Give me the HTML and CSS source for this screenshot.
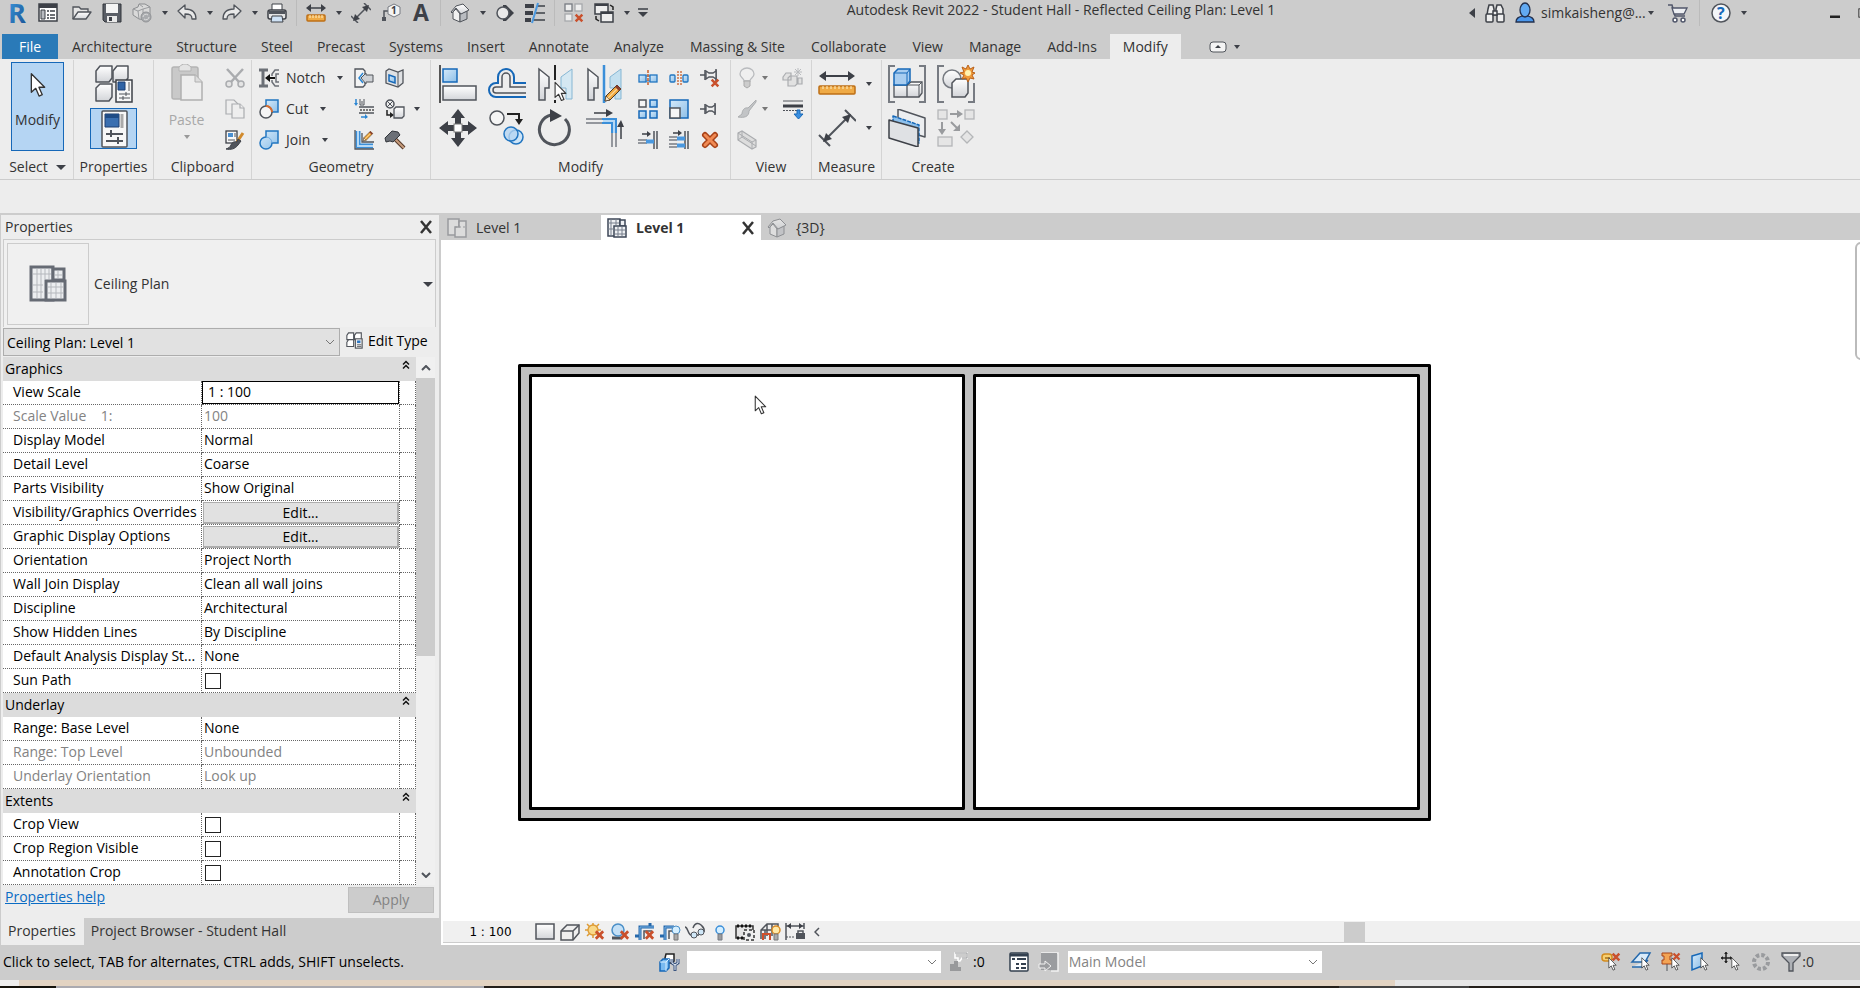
FILE: index.html
```html
<!DOCTYPE html>
<html lang="en">
  <head>
    <meta charset="UTF-8" />
    <meta name="viewport" content="width=device-width, initial-scale=1.0" />
    <title>Autodesk Revit 2022 - Student Hall</title>
    <link rel="stylesheet" href="styles.css">
  </head>
  <body>
    <!-- shared shapes -->
    <svg class="defs" aria-hidden="true">
      <defs>
        <linearGradient id="metal" x1="0" y1="0" x2="0" y2="1">
          <stop offset="0" stop-color="#ffffff" />
          <stop offset="1" stop-color="#d3d5d9" />
        </linearGradient>
        <linearGradient id="sky" x1="0" y1="0" x2="1" y2="1">
          <stop offset="0" stop-color="#d6eafa" />
          <stop offset="1" stop-color="#8dbfe8" />
        </linearGradient>
        <linearGradient id="logo" x1="0" y1="0" x2="1" y2="1">
          <stop offset="0" stop-color="#3f9be0" />
          <stop offset="1" stop-color="#164f92" />
        </linearGradient>
        <symbol id="pointer" viewBox="0 0 12 19">
          <path d="M1 1v14l3.3-3 2.5 5.8 2.4-1-2.5-5.6H11z" fill="#fff" stroke="#333" stroke-linejoin="round" />
        </symbol>
        <symbol id="cross" viewBox="0 0 12 12">
          <path d="M2 2l8 8M10 2l-8 8" stroke="#c9502c" stroke-width="3" />
        </symbol>
        <symbol id="pencil" viewBox="0 0 20 20">
          <path d="M2 18l1-5L14 2l4 4L7 17z" fill="#f0a73c" stroke="#4a3a2a" stroke-linejoin="round" />
          <path d="M2 18l1-5 4 4z" fill="#f7e2c0" stroke="#4a3a2a" stroke-width=".7" />
          <path d="M12 4l4 4 2-2-4-4z" fill="#8a3e2c" />
          <path d="M5 15L14 6" stroke="#fbd898" stroke-width="1.3" />
        </symbol>
        <symbol id="house" viewBox="0 0 20 20">
          <path d="M3 9v7l7 3V11L6 6z" fill="#f1f1f1" stroke="#50545b" />
          <path d="M10 11v8l7-3V8z" fill="#b9bcc1" stroke="#50545b" />
          <path d="M1 9l5-6 7-2 6 6-8 4-5-6-4 5z" fill="url(#metal)" stroke="#50545b" stroke-linejoin="round" />
        </symbol>
        <symbol id="ruler" viewBox="0 0 38 32">
          <path d="M4 8h30" stroke="#3d4047" stroke-width="2" />
          <path d="M1 8l7-5v10zM37 8l-7-5v10z" fill="#3d4047" />
          <rect x="1" y="18" width="36" height="8" rx="1" fill="#efaa45" stroke="#bd6f16" stroke-width="1.5" />
          <path d="M5 18v3M9 18v3M13 18v3M17 18v3M21 18v3M25 18v3M29 18v3M33 18v3" stroke="#fff1c9" />
        </symbol>
        <symbol id="ruler-small" viewBox="0 0 20 20">
          <path d="M3 5h14" stroke="#3d4047" stroke-width="1.5" />
          <path d="M0 5l5-4v8zM20 5l-5-4v8z" fill="#3d4047" />
          <rect x="1" y="12" width="18" height="6" rx="1" fill="#efaa45" stroke="#bd6f16" stroke-width="1.5" />
          <path d="M4 12v3M7 12v3M10 12v3M13 12v3M16 12v3" stroke="#fff1c9" />
        </symbol>
        <symbol id="dimension" viewBox="0 0 38 38">
          <path d="M8 30L30 8M1 26l11 11M27 1l11 11" stroke="#50545b" stroke-width="2" fill="none" />
          <path d="M5 33l3-9 6 6zM33 5l-9 3 6 6z" fill="#3d4047" />
        </symbol>
        <symbol id="dimension-small" viewBox="0 0 20 20">
          <path d="M4 16L16 4M0 13l7 7M13 0l7 7" stroke="#50545b" stroke-width="1.500" fill="none" />
          <path d="M2 18l2-7 5 5zM18 2l-7 2 5 5z" fill="#3d4047" />
        </symbol>
        <symbol id="chevrons" viewBox="0 0 8 10">
          <path d="M1 4.500l3-3 3 3M1 8.500l3-3 3 3" fill="none" stroke="#111" stroke-width="1.500" />
        </symbol>
        <symbol id="down" viewBox="0 0 10 6">
          <path d="M1 1l4 4 4-4" fill="none" stroke="#777" />
        </symbol>
        <symbol id="close" viewBox="0 0 14 14">
          <path d="M2 1l10 12M12 1L2 13" stroke="#333" stroke-width="2.500" />
        </symbol>
      </defs>
    </svg>

    <header class="titlebar">
      <div class="quick-access">
        <button class="tool" title="Revit">
          <svg viewBox="0 0 20 20" class="icon"><text x="0" y="20" class="logo-letter">R</text></svg>
        </button>
        <button class="tool tool-gap" title="Home">
          <svg viewBox="0 0 20 20" class="icon"><rect x="1" y="1" width="18" height="17" fill="#fff" stroke="#3d4047" stroke-width="1.500" /><path d="M1 1h18v4H1z" fill="#3d4047" /><path d="M3 7h4v9H3z" fill="#b9bcc1" stroke="#3d4047" /><path d="M9 8h2M12 8h5M9 12h2M12 12h5M9 15h2M12 15h5" stroke="#3d4047" stroke-width="1.500" /></svg>
        </button>
        <button class="tool" title="Open">
          <svg viewBox="0 0 20 20" class="icon"><path d="M1 16V4h6l2 2h7v4" fill="#e6e6e6" stroke="#50545b" stroke-width="1.300" /><path d="M1 16L6 9h13l-5 7z" fill="url(#metal)" stroke="#50545b" stroke-width="1.300" stroke-linejoin="round" /></svg>
        </button>
        <button class="tool" title="Save">
          <svg viewBox="0 0 20 20" class="icon"><path d="M1 1h18v18H3l-2-2z" fill="#5a5e66" stroke="#33363c" /><path d="M4 1h12v9H4z" fill="#f4f4f4" /><path d="M5 13h10v6H5z" fill="#e9e9e9" /><path d="M7 14h3v4H7z" fill="#3d4047" /></svg>
        </button>
        <button class="tool split" title="Synchronize">
          <svg viewBox="0 0 20 20" class="icon"><path d="M1 6l5-2 1-3h6l5 3v7l-3 6-8-1-6-4z" fill="#d9d9d9" stroke="#8b8d90" /><path d="M1 6l5 2 1 8M6 8l5-2 7-2M11 6v6M7 1l4 3" fill="none" stroke="#9a9c9f" /><circle cx="14" cy="14" r="5" fill="#a9abae" stroke="#909295" /><path d="M11 14a3 3 0 0 1 5-2M17 14a3 3 0 0 1-5 2" fill="none" stroke="#ddd" /></svg>
          <span class="caret"></span>
        </button>
        <button class="tool split" title="Undo">
          <svg viewBox="0 0 20 20" class="icon"><path d="M1 8l7-6v4c8 0 11 4 11 10h-4c0-4-2-5-7-5v4z" fill="#e8e8e8" stroke="#50545b" stroke-width="1.300" stroke-linejoin="round" /></svg>
          <span class="caret"></span>
        </button>
        <button class="tool split" title="Redo">
          <svg viewBox="0 0 20 20" class="icon"><path d="M19 8l-7-6v4C4 6 1 10 1 16h4c0-4 2-5 7-5v4z" fill="#e8e8e8" stroke="#50545b" stroke-width="1.300" stroke-linejoin="round" /></svg>
          <span class="caret"></span>
        </button>
        <button class="tool" title="Print">
          <svg viewBox="0 0 20 20" class="icon"><path d="M5 8V1h10v7" fill="#fff" stroke="#3d4047" /><rect x="1" y="7" width="18" height="9" rx="2" fill="#e4e4e4" stroke="#3d4047" stroke-width="1.500" /><path d="M2 8h16v3H2z" fill="#50545b" /><path d="M5 13h10l1 6H4z" fill="#cfe2f5" stroke="#3d4047" /></svg>
        </button>
        <span class="divider"></span>
        <button class="tool split" title="Measure">
          <svg class="icon"><use href="#ruler-small" /></svg>
          <span class="caret"></span>
        </button>
        <button class="tool" title="Aligned Dimension"><svg class="icon"><use href="#dimension-small" /></svg></button>
        <button class="tool" title="Tag by Category">
          <svg viewBox="0 0 20 20" class="icon"><path d="M8 8H3v7" fill="none" stroke="#50545b" stroke-width="1.500" /><rect x="1" y="14" width="4" height="4" fill="#50545b" /><path d="M13 1l6 3v7l-6 3-6-3V4z" fill="#f4f4f4" stroke="#777b82" /><text x="10" y="11" class="tag-number">1</text></svg>
        </button>
        <button class="tool" title="Text"><svg viewBox="0 0 20 20" class="icon"><text x="2" y="18" class="letter-icon">A</text></svg></button>
        <span class="divider"></span>
        <button class="tool split" title="Default 3D View">
          <svg class="icon"><use href="#house" /></svg>
          <span class="caret"></span>
        </button>
        <button class="tool" title="Section">
          <svg viewBox="0 0 20 20" class="icon"><path d="M8 2h3l8 8-8 8H8z" fill="#3d4047" /><circle cx="8" cy="10" r="6" fill="#e9e9e9" stroke="#50545b" stroke-width="1.500" /></svg>
        </button>
        <button class="tool" title="Thin Lines">
          <svg viewBox="0 0 20 20" class="icon"><path d="M0 3h9M0 10h8M0 17h6" stroke="#3d4047" stroke-width="4" /><path d="M12 3h8M11 10h9M8 17h12" stroke="#3d4047" stroke-width="1.500" /><path d="M13 0L7 20" stroke="#4a98df" stroke-width="2" /></svg>
        </button>
        <span class="divider"></span>
        <button class="tool" title="Close Inactive Views">
          <svg viewBox="0 0 20 20" class="icon"><g fill="#eee" stroke="#777b82" stroke-width="1.300"><rect x="1" y="1" width="7" height="7" /><rect x="11" y="1" width="7" height="7" stroke="#a7a9ac" /><rect x="1" y="11" width="7" height="7" stroke="#a7a9ac" /></g><use href="#cross" x="10" y="10" width="10" height="10" /></svg>
        </button>
        <button class="tool split" title="Switch Windows">
          <svg viewBox="0 0 20 20" class="icon"><g fill="#eee" stroke="#3d4047" stroke-width="1.500"><rect x="1" y="1" width="13" height="10" /><rect x="7" y="9" width="12" height="10" /></g><path d="M1 2h13M7 10h12" stroke="#3d4047" stroke-width="2" /><path d="M16 2l3 2v3M2 13v3l3 2" fill="none" stroke="#222" stroke-width="1.500" /></svg>
          <span class="caret"></span>
        </button>
        <button class="tool menu-end" title="Customize Quick Access Toolbar">
          <svg viewBox="0 0 10 10" class="icon-small"><path d="M0 1h10" stroke="#3d4047" stroke-width="1.500" /><path d="M0 4h10L5 9z" fill="#3d4047" /></svg>
        </button>
      </div>
      <h1 class="window-title">Autodesk Revit 2022 - Student Hall - Reflected Ceiling Plan: Level 1</h1>
      <div class="account-bar">
        <button class="tool collapse" title="Collapse search"><svg viewBox="0 0 6 10" class="arrow-left"><path d="M6 0v10L0 5z" fill="#3d4047" /></svg></button>
        <button class="tool" title="Search">
          <svg viewBox="0 0 20 20" class="icon"><g fill="#eee" stroke="#3d4047" stroke-width="1.500"><path d="M3 6l1-4h4l1 4v6H2z" /><path d="M11 6l1-4h4l2 4v6h-7z" /><rect x="1" y="11" width="7" height="8" rx="1" /><rect x="12" y="11" width="7" height="8" rx="1" /><path d="M8 8h4v4H8z" /></g></svg>
        </button>
        <button class="tool account" title="Account">
          <svg viewBox="0 0 20 20" class="icon"><path d="M1 19c0-4 3-5 6-6h6c3 1 6 2 6 6z" fill="#4a98ee" stroke="#23304d" stroke-width="1.300" /><ellipse cx="10" cy="7" rx="5" ry="7" fill="#62aaf2" stroke="#23304d" stroke-width="1.300" /></svg>
          <span>simkaisheng@...</span><span class="caret"></span>
        </button>
        <button class="tool" title="App Store">
          <svg viewBox="0 0 20 20" class="icon"><path d="M0 2h4l3 11h10" fill="none" stroke="#50566a" stroke-width="1.500" /><path d="M4 5h15l-3 6H6z" fill="#eceef2" stroke="#50566a" stroke-width="1.300" /><circle cx="7" cy="17" r="2" fill="#fff" stroke="#50566a" stroke-width="1.500" /><circle cx="15" cy="17" r="2" fill="#fff" stroke="#50566a" stroke-width="1.500" /></svg>
        </button>
        <span class="divider"></span>
        <button class="tool split" title="Help">
          <svg viewBox="0 0 20 20" class="icon"><circle cx="10" cy="10" r="9" fill="#f4f6f9" stroke="#50545b" stroke-width="1.500" /><text x="6" y="16" class="help-mark">?</text></svg>
          <span class="caret"></span>
        </button>
        <span class="spacer"></span>
        <button class="tool" title="Minimize"><svg viewBox="0 0 10 10" class="icon-small"><path d="M0 9h10" stroke="#222" stroke-width="3" /></svg></button>
        <button class="tool maximize" title="Maximize"><svg viewBox="0 0 12 12" class="icon-small"><rect x="1" y="1" width="10" height="10" fill="none" stroke="#222" /></svg></button>
      </div>
    </header>

    <nav class="ribbon-tabs">
      <button class="ribbon-tab file">File</button>
      <button class="ribbon-tab">Architecture</button>
      <button class="ribbon-tab">Structure</button>
      <button class="ribbon-tab">Steel</button>
      <button class="ribbon-tab">Precast</button>
      <button class="ribbon-tab">Systems</button>
      <button class="ribbon-tab">Insert</button>
      <button class="ribbon-tab">Annotate</button>
      <button class="ribbon-tab roomy">Analyze</button>
      <button class="ribbon-tab roomy">Massing &amp; Site</button>
      <button class="ribbon-tab roomy">Collaborate</button>
      <button class="ribbon-tab roomy">View</button>
      <button class="ribbon-tab roomy">Manage</button>
      <button class="ribbon-tab roomy">Add-Ins</button>
      <button class="ribbon-tab roomy active">Modify</button>
      <button class="ribbon-state" title="Minimize ribbon">
        <svg viewBox="0 0 18 12" class="state-icon"><rect x="1" y="1" width="16" height="10" rx="3" fill="#f4f4f4" stroke="#50545b" /><path d="M6 7l3-3 3 3z" fill="#3d4047" /></svg>
        <span class="caret"></span>
      </button>
    </nav>

    <section class="ribbon">
      <div class="panel panel-select">
        <div class="panel-body">
          <button class="modify-button">
            <svg class="modify-arrow"><use href="#pointer" /></svg>
            Modify
          </button>
        </div>
        <div class="panel-label">Select <span class="caret wide"></span></div>
      </div>

      <div class="panel panel-properties">
        <div class="panel-body stack">
          <button class="big" title="Type Properties">
            <svg viewBox="0 0 38 38" class="icon-large"><g fill="url(#metal)" stroke="#50545b" stroke-width="1.500" stroke-linejoin="round"><path d="M1 6l4-5h12v12l-3 4H1z" /><path d="M18 6l4-5h11v12l-3 4H18z" /><path d="M1 23l4-4h12v13l-3 4H1z" /></g><rect x="21" y="15" width="16" height="22" fill="#f7f7f7" stroke="#3d4047" stroke-width="1.500" /><path d="M23 17h7v8h-7z" fill="#2f63a5" stroke="#1c3f70" /><path d="M34 17v9" stroke="#aaa" stroke-width="2" /><path d="M24 29h11M24 33h11M31 27v4M28 31v4" stroke="#50545b" /></svg>
          </button>
          <button class="big selected" title="Properties">
            <svg viewBox="0 0 38 38" class="icon-large"><rect x="7" y="1" width="25" height="36" rx="1" fill="#f7f7f7" stroke="#50545b" stroke-width="1.500" /><path d="M10 4h14v13H10z" fill="#3a6fb0" stroke="#1c3f70" /><path d="M10 4h14v4H10z" fill="#1f4c86" /><path d="M27 4v14" stroke="#aaa" stroke-width="3" /><path d="M11 24h17M11 31h17M16 20v7M23 27v7" stroke="#50545b" stroke-width="2" /></svg>
          </button>
        </div>
        <div class="panel-label">Properties</div>
      </div>

      <div class="panel panel-clipboard">
        <div class="panel-body columns">
          <button class="paste-button" disabled>
            <svg viewBox="0 0 34 38" class="icon-large"><rect x="2" y="3" width="26" height="32" rx="2" fill="#c9c9c9" stroke="#b4b4b4" stroke-width="1.500" /><path d="M9 7V3c4-4 8-4 12 0v4z" fill="#e4e4e4" stroke="#b4b4b4" /><path d="M11 11h14l7 7v18H11z" fill="#eee" stroke="#b0b0b0" stroke-width="1.500" /><path d="M25 11v7h7" fill="#ddd" stroke="#b0b0b0" /></svg>
            Paste
            <span class="caret"></span>
          </button>
          <div class="small-grid one">
            <button class="small" title="Cut to Clipboard" disabled><svg viewBox="0 0 20 20" class="icon"><path d="M2 1l12 13M18 1L6 14" stroke="#aaacaf" stroke-width="2.500" /><circle cx="4" cy="16" r="3" fill="#e4e4e4" stroke="#aaacaf" stroke-width="1.500" /><circle cx="16" cy="16" r="3" fill="#e4e4e4" stroke="#aaacaf" stroke-width="1.500" /></svg></button>
            <button class="small" title="Copy to Clipboard" disabled><svg viewBox="0 0 20 20" class="icon"><g fill="#eee" stroke="#aaacaf" stroke-width="1.200"><path d="M1 1h8l4 4v10H1z" /><path d="M7 5h8l4 4v10H7z" /><path d="M15 5v4h4" /></g></svg></button>
            <button class="small" title="Match Type Properties"><svg viewBox="0 0 20 20" class="icon"><rect x="1" y="1" width="11" height="12" fill="#f7f7f7" stroke="#3d4047" stroke-width="1.300" /><path d="M3 3h5v4H3z" fill="#4a8fd0" /><path d="M10 3v4M3 10h7" stroke="#50545b" /><path d="M18 3l-6 9" stroke="#d18a2c" stroke-width="3" /><path d="M13 9l3 2-3 4c-3 4-7 5-12 4 3-1 4-2 5-4 1-3 4-4 6-3z" fill="#50545b" stroke="#3d4047" /></svg></button>
          </div>
        </div>
        <div class="panel-label">Clipboard</div>
      </div>

      <div class="panel panel-geometry">
        <div class="panel-body columns">
          <div class="commands">
            <button class="command"><svg viewBox="0 0 20 20" class="icon"><path d="M0 2h9M0 18h9M4 2v16" stroke="#6c7077" stroke-width="3" /><path d="M20 2h-4l-3 4v2M20 18h-4l-3-4v-2M20 6h-3v8h3" fill="none" stroke="#6c7077" stroke-width="1.500" /><path d="M9 10h7" stroke="#111" stroke-width="2" /><path d="M6 10l5-4v8z" fill="#111" /></svg>Notch<span class="caret"></span></button>
            <button class="command"><svg viewBox="0 0 20 20" class="icon"><rect x="7" y="1" width="12" height="12" fill="url(#sky)" stroke="#2175c0" stroke-width="1.500" /><circle cx="7" cy="13" r="6" fill="#f5f5f5" stroke="#50545b" stroke-width="1.500" /><path d="M7 7a6 6 0 0 1 6 6" fill="none" stroke="#d86a2c" stroke-width="2" /></svg>Cut<span class="caret"></span></button>
            <button class="command"><svg viewBox="0 0 20 20" class="icon"><path d="M7 1h12v12h-6a6 6 0 1 1-6-6z" fill="url(#sky)" stroke="#2175c0" stroke-width="1.500" /><path d="M7 7a6 6 0 0 1 6 6" fill="none" stroke="#6fa9dc" /></svg>Join<span class="caret"></span></button>
          </div>
          <div class="small-grid two">
            <button class="small" title="Beam/Column Joins"><svg viewBox="0 0 20 20" class="icon"><path d="M1 1h8l2 2v14l-2 2H1z" fill="#f4f4f4" stroke="#50545b" stroke-width="1.300" /><path d="M7 10l5-5v2h7v7h-7v2z" fill="#cfd2d6" stroke="#50545b" /><path d="M9 5l-4 5 4 5" fill="none" stroke="#2b86d3" stroke-width="1.500" /></svg></button>
            <button class="small" title="Split Face"><svg viewBox="0 0 20 20" class="icon"><path d="M1 3l3-2 9 3 5-2v13l-5 4L1 15z" fill="#dfe1e4" stroke="#50545b" stroke-width="1.300" /><path d="M13 4v15" stroke="#50545b" /><path d="M4 7l6 2v6l-6-2z" fill="url(#sky)" stroke="#1668b8" stroke-width="1.500" /></svg></button>
            <button class="small" title="Wall Joins"><svg viewBox="0 0 20 20" class="icon"><path d="M2 0v5M7 18h6" stroke="#2b86d3" stroke-width="1.500" /><path d="M0 4h4L2 7zM11 15v5l3-2z" fill="#2b86d3" /><path d="M6 0v6h4V0M8 2v3" fill="#eee" stroke="#50545b" /><path d="M5 8h15M5 14h15" stroke="#50545b" stroke-width="1.500" /><path d="M6 11h14" stroke="#777" stroke-width="2" stroke-dasharray="2 1" /></svg></button>
            <button class="small" title="Unjoin"><svg viewBox="0 0 20 20" class="icon"><circle cx="5" cy="5" r="4" fill="#eee" stroke="#50545b" stroke-width="1.500" /><path d="M2 2l6 6M8 2L2 8" stroke="#50545b" /><path d="M2 11v5h4" fill="none" stroke="#222" stroke-width="1.500" /><path d="M5 13l4 3-4 3z" fill="#222" /><path d="M9 10l2-2h8v9l-2 2H9z" fill="url(#metal)" stroke="#50545b" stroke-width="1.300" /></svg></button>
            <button class="small" title="Paint"><svg viewBox="0 0 20 20" class="icon"><path d="M4 1v15h15" fill="none" stroke="#3b8fd9" stroke-width="5" /><path d="M4 1v15h15" fill="none" stroke="#b7d9f5" stroke-width="2" /><path d="M1 0v19h19M8 3v9h12" fill="none" stroke="#50545b" stroke-width="1.300" /><use href="#pencil" x="8" y="0" width="12" height="12" /></svg></button>
            <button class="small" title="Demolish"><svg viewBox="0 0 20 20" class="icon"><path d="M9 8l10 10" stroke="#553a2a" stroke-width="4" /><path d="M9 8l10 10" stroke="#c79c7d" stroke-width="2" /><path d="M0 8l7-7 6 1 2 3-7 7-3-1-4 1z" fill="#6c7077" stroke="#33363c" /></svg></button>
          </div>
          <span class="caret middle"></span>
        </div>
        <div class="panel-label">Geometry</div>
      </div>

      <div class="panel panel-modify">
        <div class="panel-body columns">
          <div class="large-grid four">
            <button class="big" title="Align"><svg viewBox="0 0 38 38" class="icon-large"><path d="M1 0v38" stroke="#222" stroke-width="1.500" /><rect x="4" y="4" width="14" height="13" fill="url(#sky)" stroke="#1668b8" stroke-width="1.500" /><rect x="4" y="21" width="33" height="14" fill="url(#metal)" stroke="#50545b" stroke-width="1.500" /></svg></button>
            <button class="big" title="Offset"><svg viewBox="0 0 38 38" class="icon-large"><path d="M38 18H26v-6a8 8 0 0 0-16 0v6H8a7 7 0 0 0 0 14h30" fill="none" stroke="#1668b8" stroke-width="2" /><path d="M38 22H22V12a4 4 0 0 0-8 0v10H8a3 3 0 0 0 0 6h30" fill="none" stroke="#50545b" stroke-width="1.500" /></svg></button>
            <button class="big" title="Mirror - Pick Axis"><svg viewBox="0 0 38 38" class="icon-large"><path d="M2 4l10 8v11H8v12H2z" fill="url(#metal)" stroke="#50545b" stroke-width="1.500" /><path d="M35 4l-11 8v11h5v11h6z" fill="#d5e8f2" stroke="#86b7d4" /><path d="M18 0v38" stroke="#222" stroke-width="2" stroke-dasharray="15 20" /><use href="#pointer" x="17" y="16" width="13" height="21" /></svg></button>
            <button class="big" title="Mirror - Draw Axis"><svg viewBox="0 0 38 38" class="icon-large"><path d="M2 4l10 8v11H8v12H2z" fill="url(#metal)" stroke="#50545b" stroke-width="1.500" /><path d="M35 4l-11 8v11h5v11h6z" fill="#c4e0ef" stroke="#86b7d4" /><path d="M18 0v38" stroke="#3b8fd9" stroke-width="2.500" /><use href="#pencil" x="17" y="18" width="20" height="20" /></svg></button>
            <button class="big" title="Move"><svg viewBox="0 0 38 38" class="icon-large"><path d="M19 0l7 9h-4v6h-6V9h-4zM19 38l7-9h-4v-6h-6v6h-4zM0 19l9-7v4h6v6H9v4zM38 19l-9-7v4h-6v6h6v4z" fill="#3d4047" /><rect x="15" y="15" width="8" height="8" fill="#fff" stroke="#777" /></svg></button>
            <button class="big" title="Copy"><svg viewBox="0 0 38 38" class="icon-large"><circle cx="9" cy="9" r="7" fill="#f5f5f5" stroke="#50545b" stroke-width="1.500" /><path d="M19 5h12v8" fill="none" stroke="#222" stroke-width="2" /><path d="M27 10h8l-4 6z" fill="#222" /><circle cx="28" cy="28" r="7" fill="#cde4f7" stroke="#2175c0" stroke-width="1.500" /><circle cx="23" cy="25" r="7" fill="#b5d5f1" fill-opacity=".8" stroke="#2175c0" stroke-width="1.500" /></svg></button>
            <button class="big" title="Rotate"><svg viewBox="0 0 38 38" class="icon-large"><path d="M28 10a15 15 0 1 1-14-4" fill="none" stroke="#50545b" stroke-width="3" /><path d="M13 0l12 7-12 6z" fill="#3d4047" /></svg></button>
            <button class="big" title="Trim/Extend to Corner"><svg viewBox="0 0 38 38" class="icon-large"><path d="M0 10h18M0 14h18M26 20v18M30 20v18" stroke="#777b82" stroke-width="1.500" /><path d="M16 10h14v14M16 14h10v10" fill="none" stroke="#3b8fd9" stroke-width="2" /><path d="M17 12h11v12" fill="none" stroke="#b7d9f5" stroke-width="2" /><path d="M8 4h14M35 30V15" stroke="#3d4047" stroke-width="1.500" /><path d="M20 0l7 4-7 4zM31 18l4-7 3 7z" fill="#3d4047" /></svg></button>
          </div>
          <div class="small-grid three">
            <button class="small" title="Split Element"><svg viewBox="0 0 20 20" class="icon"><rect x="1" y="7" width="7" height="7" fill="url(#sky)" stroke="#2175c0" stroke-width="1.300" /><rect x="12" y="7" width="7" height="7" fill="url(#sky)" stroke="#2175c0" stroke-width="1.300" /><path d="M8 8h4M8 13h4" stroke="#2175c0" /><path d="M10 2v16" stroke="#c8602c" stroke-width="1.500" stroke-dasharray="3 1" /></svg></button>
            <button class="small" title="Split with Gap"><svg viewBox="0 0 20 20" class="icon"><rect x="1" y="7" width="5" height="7" rx="1" fill="url(#sky)" stroke="#2175c0" stroke-width="1.300" /><rect x="14" y="7" width="5" height="7" rx="1" fill="url(#sky)" stroke="#2175c0" stroke-width="1.300" /><path d="M9 3v15M12 3v15" stroke="#c8602c" stroke-width="1.300" stroke-dasharray="2 1" /></svg></button>
            <button class="small" title="Unpin"><svg viewBox="0 0 20 20" class="icon"><path d="M0 7h5M5 2v10M16 1v12" fill="none" stroke="#50545b" stroke-width="1.500" /><path d="M6 3l3 2h4l3-2v8l-3-2H9l-3 2z" fill="#eee" stroke="#50545b" stroke-width="1.300" /><use href="#cross" x="10" y="10" width="10" height="10" /></svg></button>
            <button class="small" title="Array"><svg viewBox="0 0 20 20" class="icon"><g fill="url(#sky)" stroke="#1668b8" stroke-width="1.500"><rect x="1" y="1" width="7" height="7" fill="#f5f5f5" stroke="#50545b" /><rect x="12" y="1" width="7" height="7" /><rect x="1" y="12" width="7" height="7" /><rect x="12" y="12" width="7" height="7" /></g></svg></button>
            <button class="small" title="Scale"><svg viewBox="0 0 20 20" class="icon"><rect x="1" y="1" width="18" height="18" fill="url(#sky)" stroke="#1668b8" stroke-width="1.500" /><rect x="1" y="9" width="10" height="10" fill="#f5f5f5" stroke="#50545b" stroke-width="1.500" /></svg></button>
            <button class="small" title="Pin"><svg viewBox="0 0 20 20" class="icon"><path d="M0 10h6M5 5v10M15 4v12" fill="none" stroke="#50545b" stroke-width="1.500" /><path d="M6 6l3 2h3l3-2v8l-3-2H9l-3 2z" fill="#eee" stroke="#50545b" stroke-width="1.300" /></svg></button>
            <button class="small" title="Trim/Extend Single Element"><svg viewBox="0 0 20 20" class="icon"><path d="M16 1v18M19 1v18" stroke="#50545b" stroke-width="1.500" /><path d="M0 10h9M0 13h9" stroke="#777b82" stroke-width="1.500" /><path d="M8 11.500h8" stroke="#4a98df" stroke-width="4" /><path d="M4 4h6" stroke="#3d4047" stroke-width="1.500" /><path d="M9 1l4 3-4 3z" fill="#3d4047" /></svg></button>
            <button class="small" title="Trim/Extend Multiple Elements"><svg viewBox="0 0 20 20" class="icon"><path d="M16 1v18M19 1v18" stroke="#50545b" stroke-width="1.500" /><path d="M0 7h8M0 10h8M0 14h8M0 17h8" stroke="#777b82" stroke-width="1.500" /><path d="M8 8.500h8M8 15.500h8" stroke="#4a98df" stroke-width="4" /><path d="M4 3h6" stroke="#3d4047" stroke-width="1.500" /><path d="M9 0l4 3-4 3z" fill="#3d4047" /></svg></button>
            <button class="small" title="Delete"><svg viewBox="0 0 20 20" class="icon"><path d="M5 5l10 10M15 5L5 15" stroke="#a84218" stroke-width="6" stroke-linecap="round" /><path d="M5 5l10 10M15 5L5 15" stroke="#f08a54" stroke-width="3" stroke-linecap="round" /></svg></button>
          </div>
        </div>
        <div class="panel-label">Modify</div>
      </div>

      <div class="panel panel-view">
        <div class="panel-body columns">
          <div class="view-grid">
            <button class="small" title="Hide in View" disabled><svg viewBox="0 0 20 20" class="icon"><path d="M7 13c0-3-4-3-4-7a7 6 0 0 1 14 0c0 4-4 4-4 7z" fill="#efefef" stroke="#b9bbbe" stroke-width="1.300" /><path d="M7 13h6v5l-3 2-3-2z" fill="#ccc" stroke="#aaa" /></svg></button>
            <span class="caret muted"></span>
            <button class="small" title="Displace Elements" disabled><svg viewBox="0 0 20 20" class="icon"><path d="M0 9l3-4h5v7H0zM5 10l2-2h7v8l-2 2H5zM15 10h4v6h-4z" fill="#e1e1e1" stroke="#aaacaf" stroke-width="1.200" /><path d="M15 0v8M11 4h8M12 1l6 6M18 1l-6 6" stroke="#b9bbbe" /></svg></button>
            <button class="small" title="Override Graphics" disabled><svg viewBox="0 0 20 20" class="icon"><path d="M19 1L11 9c-4-1-6 3-6 6l-4 3c6 1 11 0 11-6l7-9z" fill="#c2c4c6" stroke="#acaeb0" /></svg></button>
            <span class="caret muted"></span>
            <button class="small" title="Linework"><svg viewBox="0 0 20 20" class="icon"><path d="M0 2h20" stroke="#50545b" /><path d="M0 7h20" stroke="#3d4047" stroke-width="3" /><path d="M0 11.500h20" stroke="#50545b" stroke-dasharray="2 1" /><path d="M14 11h3v4h3l-4.500 5L11 15h3z" fill="#3b8fe0" stroke="#1668b8" /></svg></button>
            <button class="small" title="Selection Box" disabled><svg viewBox="0 0 20 20" class="icon"><path d="M1 3l4-2 14 9v7l-4 2L1 10z" fill="#ddd" stroke="#aaacaf" stroke-width="1.200" /><path d="M1 3l14 9 4-2M15 12v7M5 1v6l14 9M5 7l-4 3" fill="none" stroke="#aaacaf" /></svg></button>
          </div>
        </div>
        <div class="panel-label">View</div>
      </div>

      <div class="panel panel-measure">
        <div class="panel-body columns">
          <div class="large-grid measure">
            <button class="big" title="Measure"><svg class="icon-large"><use href="#ruler" /></svg></button>
            <span class="caret"></span>
            <button class="big" title="Aligned Dimension"><svg class="icon-large"><use href="#dimension" /></svg></button>
            <span class="caret"></span>
          </div>
        </div>
        <div class="panel-label">Measure</div>
      </div>

      <div class="panel panel-create">
        <div class="panel-body columns">
          <div class="large-grid two">
            <button class="big" title="Create Assembly"><svg viewBox="0 0 38 38" class="icon-large"><path d="M7 1H1v36h6M31 1h6v36h-6" fill="none" stroke="#777b82" stroke-width="2" /><g fill="url(#metal)" stroke="#50545b" stroke-width="1.300"><path d="M6 20h13v12H6zM19 20l4-3h11v11l-3 4H19z" /></g><path d="M6 8l4-4h12v12l-3 4H6z" fill="#a8cdf0" stroke="#1668b8" stroke-width="1.500" /><path d="M6 8h13v12M19 8l3-4" fill="none" stroke="#1668b8" /><path d="M19 20h12v12M31 20l3-3" fill="none" stroke="#50545b" /></svg></button>
            <button class="big" title="Create Group"><svg viewBox="0 0 38 38" class="icon-large"><path d="M7 1H1v36h6M31 37h6V18" fill="none" stroke="#777b82" stroke-width="2" /><circle cx="15" cy="14" r="9" fill="url(#metal)" stroke="#777b82" stroke-width="1.500" /><path d="M15 18l4-4h12v14l-3 4H15z" fill="url(#metal)" stroke="#50545b" stroke-width="1.500" /><path d="M31 0l2 4 4-2-2 5 3 1-3 2 2 4-4-1-2 4-2-4-4 1 2-4-4-2 4-1-2-5 4 2z" fill="#ef9a3a" stroke="#b9601a" /><circle cx="31" cy="8" r="3" fill="#fff2b0" /></svg></button>
            <button class="big" title="Create Parts"><svg viewBox="0 0 38 38" class="icon-large"><g stroke-width="1.500" stroke-linejoin="round"><path d="M10 0l27 9v19L10 20z" fill="#eceef0" stroke="#50545b" /><path d="M5 7l26 9v18L5 26z" fill="#8dc0ec" stroke="#1668b8" stroke-dasharray="4 1" /><path d="M1 11l29 8v19L1 29z" fill="#dfe1e4" stroke="#3d4047" /></g></svg></button>
            <button class="big" title="Create Similar" disabled><svg viewBox="0 0 38 38" class="icon-large"><g fill="#e5e5e5" stroke="#b4b6b8" stroke-width="1.300"><rect x="1" y="1" width="9" height="9" /><rect x="28" y="1" width="9" height="9" /><rect x="1" y="28" width="14" height="9" /><path d="M30 22l6 6-6 6-6-6z" /></g><path d="M13 5h9M5 13v9M14 13l6 6" stroke="#999b9e" stroke-width="2" /><path d="M20 1l6 4-6 4zM1 20h8l-4 6zM23 22v-7l-7 7z" fill="#999b9e" /></svg></button>
          </div>
        </div>
        <div class="panel-label">Create</div>
      </div>
    </section>

    <div class="options-bar"></div>

    <main class="workspace">
      <aside class="palette">
        <div class="palette-title">
          <h2>Properties</h2>
          <button class="close-button" title="Close"><svg class="close-icon"><use href="#close" /></svg></button>
        </div>
        <button class="type-selector">
          <span class="type-preview">
            <svg viewBox="0 0 38 38" class="icon-large"><g fill="#eceef0" stroke="#666b74" stroke-width="3"><path d="M2 2h22v33H2z" /><path d="M24 4h11v11H24z" /><path d="M17 16h19v19H17z" /></g><path d="M8 4v29M12 4v29M16 4v10M20 4v10M4 9h18M4 20h10M4 27h10M22 18v15M27 18v15M32 18v15M19 22h15M19 28h15M29 6v7M26 10h7" stroke="#b5b8bd" /></svg>
          </span>
          <span class="type-name">Ceiling Plan</span>
          <span class="caret wide"></span>
        </button>
        <div class="filter-row">
          <div class="select-box filter">
            <select aria-label="Filter"><option>Ceiling Plan: Level 1</option></select>
            <svg class="select-arrow"><use href="#down" /></svg>
          </div>
          <button class="edit-type">
            <svg viewBox="0 0 20 20" class="icon-edit"><g fill="#fff" stroke="#50545b" stroke-width="1.300"><path d="M1 4l2-3h6v8H1zM10 4l2-3h6v8h-8zM1 12l2-3h6v8H1z" /><rect x="11" y="8" width="8" height="11" fill="#eee" /></g><path d="M13 10h4v3h-4z" fill="#2b76c4" /><path d="M13 15h5M13 17h5" stroke="#50545b" /></svg>
            Edit Type
          </button>
        </div>

        <div class="grid-area">
          <table class="properties">
            <colgroup><col class="col-name"><col><col class="col-link"></colgroup>
            <tbody>
              <tr class="group"><th colspan="3">Graphics <button title="Collapse"><svg class="chevrons"><use href="#chevrons" /></svg></button></th></tr>
              <tr><th><label for="view-scale">View Scale</label></th><td class="editing"><input id="view-scale" type="text" value="1 : 100" /></td><td></td></tr>
              <tr class="readonly"><th>Scale Value &nbsp;&nbsp; 1:</th><td>100</td><td></td></tr>
              <tr><th>Display Model</th><td>Normal</td><td></td></tr>
              <tr><th>Detail Level</th><td>Coarse</td><td></td></tr>
              <tr><th>Parts Visibility</th><td>Show Original</td><td></td></tr>
              <tr><th>Visibility/Graphics Overrides</th><td class="action"><button>Edit...</button></td><td></td></tr>
              <tr><th>Graphic Display Options</th><td class="action"><button>Edit...</button></td><td></td></tr>
              <tr><th>Orientation</th><td>Project North</td><td></td></tr>
              <tr><th>Wall Join Display</th><td>Clean all wall joins</td><td></td></tr>
              <tr><th>Discipline</th><td>Architectural</td><td></td></tr>
              <tr><th>Show Hidden Lines</th><td>By Discipline</td><td></td></tr>
              <tr><th>Default Analysis Display St...</th><td>None</td><td></td></tr>
              <tr><th><label for="sun-path">Sun Path</label></th><td><input id="sun-path" type="checkbox" /></td><td></td></tr>
              <tr class="group"><th colspan="3">Underlay <button title="Collapse"><svg class="chevrons"><use href="#chevrons" /></svg></button></th></tr>
              <tr><th>Range: Base Level</th><td>None</td><td></td></tr>
              <tr class="readonly"><th>Range: Top Level</th><td>Unbounded</td><td></td></tr>
              <tr class="readonly"><th>Underlay Orientation</th><td>Look up</td><td></td></tr>
              <tr class="group"><th colspan="3">Extents <button title="Collapse"><svg class="chevrons"><use href="#chevrons" /></svg></button></th></tr>
              <tr><th><label for="crop-view">Crop View</label></th><td><input id="crop-view" type="checkbox" /></td><td></td></tr>
              <tr><th><label for="crop-region">Crop Region Visible</label></th><td><input id="crop-region" type="checkbox" /></td><td></td></tr>
              <tr><th><label for="annotation-crop">Annotation Crop</label></th><td><input id="annotation-crop" type="checkbox" /></td><td></td></tr>
            </tbody>
          </table>
          <div class="scrollbar">
            <svg viewBox="0 0 10 6" class="scroll-arrow"><path d="M1 5l4-4 4 4" fill="none" stroke="#50545b" stroke-width="2" /></svg>
            <div class="thumb"></div>
            <svg viewBox="0 0 10 6" class="scroll-arrow"><path d="M1 1l4 4 4-4" fill="none" stroke="#50545b" stroke-width="2" /></svg>
          </div>
        </div>

        <div class="palette-footer">
          <a href="#">Properties help</a>
          <button class="apply" disabled>Apply</button>
        </div>
        <div class="palette-tabs">
          <button class="active">Properties</button>
          <button>Project Browser - Student Hall</button>
        </div>
      </aside>

      <section class="views">
        <div class="view-tabs">
          <button class="view-tab">
            <svg viewBox="0 0 20 20" class="icon"><g fill="#dcdcdc" stroke="#999b9e" stroke-width="1.500"><path d="M1 1h11v16H1z" /><path d="M12 3h7v16H8V9h4z" /></g><path d="M8 9h11M12 3v6" stroke="#999b9e" stroke-dasharray="2 2" /></svg>
            Level 1
          </button>
          <div class="view-tab active">
            <svg viewBox="0 0 20 20" class="icon"><g fill="#eef0f3" stroke="#3d4657" stroke-width="1.500"><path d="M1 1h12v17H1z" /><path d="M13 2h5v6h-5z" /><path d="M7 8h12v11H7z" /></g><path d="M4 1v17M9 1v6M1 5h11M1 11h6M11 9v9M15 9v9M8 12h10M8 16h10" stroke="#777f8c" /></svg>
            <span>Level 1</span>
            <button class="close-button" title="Close view"><svg class="close-icon"><use href="#close" /></svg></button>
          </div>
          <button class="view-tab"><svg class="icon faded"><use href="#house" /></svg>{3D}</button>
        </div>

        <div class="canvas">
          <svg class="drawing" role="img" aria-label="Floor plan with two rooms">
            <g stroke="#000" stroke-width="3" stroke-linejoin="round">
              <rect x="78.500" y="125.500" width="910" height="454" fill="#c0c0c0" />
              <rect x="89.500" y="135.500" width="433" height="433" fill="#fff" />
              <rect x="533.500" y="135.500" width="444" height="433" fill="#fff" />
            </g>
            <use href="#pointer" x="313" y="155" width="13" height="20" />
          </svg>
          <div class="navigation-bar"></div>
        </div>

        <div class="view-controls">
          <button class="scale">1 : 100</button>
          <button class="control" title="Detail Level"><svg viewBox="0 0 20 20" class="icon"><rect x="1" y="2" width="18" height="15" fill="url(#metal)" stroke="#50545b" stroke-width="1.500" /></svg></button>
          <button class="control" title="Visual Style"><svg viewBox="0 0 20 20" class="icon"><path d="M1 9l6-6h12v8l-6 7H1z" fill="#eee" stroke="#50545b" stroke-width="1.500" /><path d="M1 9h12v9M13 9l6-6" fill="none" stroke="#50545b" stroke-width="1.500" /></svg></button>
          <button class="control" title="Sun Path Off"><svg viewBox="0 0 20 20" class="icon"><path d="M8 1v15M0 8h16M2 2l12 12M14 2L2 14" stroke="#dd9b35" stroke-width="1.500" /><circle cx="8" cy="8" r="5" fill="#f9d888" stroke="#dd9b35" stroke-width="1.300" /><use href="#cross" x="9" y="7" width="11" height="12" /></svg></button>
          <button class="control" title="Shadows Off"><svg viewBox="0 0 20 20" class="icon"><path d="M2 16h10" stroke="#50545b" stroke-width="3" /><circle cx="8" cy="8" r="6" fill="#c4e0f6" stroke="#4a8fc8" stroke-width="1.500" /><use href="#cross" x="9" y="7" width="11" height="12" /></svg></button>
          <button class="control" title="Do Not Crop View"><svg viewBox="0 0 20 20" class="icon"><path d="M5 18V5h14M0 14h5M15 1v4" fill="none" stroke="#2568ab" stroke-width="3" /><path d="M5 18V5h14" fill="none" stroke="#7db4e6" /><path d="M9 17V9h8" fill="none" stroke="#50545b" stroke-width="1.500" /><use href="#cross" x="9" y="7" width="11" height="12" /></svg></button>
          <button class="control" title="Show Crop Region"><svg viewBox="0 0 20 20" class="icon"><path d="M5 18V5h9M0 14h5" fill="none" stroke="#2568ab" stroke-width="3" /><path d="M5 18V5h9" fill="none" stroke="#7db4e6" /><path d="M9 17V9h4" fill="none" stroke="#50545b" stroke-width="1.500" /><circle cx="16" cy="8" r="4" fill="#d5efff" stroke="#4a8fc8" /><path d="M14 12h4v6h-4z" fill="#aaa" stroke="#777" /></svg></button>
          <button class="control" title="Temporary Hide/Isolate"><svg viewBox="0 0 20 20" class="icon"><path d="M0 5c3 0 3 8 6 8h8M8 6c2-6 6-5 8-3s4 3 3 7" fill="none" stroke="#50545b" stroke-width="1.500" /><ellipse cx="9" cy="13" rx="3" ry="3" fill="#cfe7f7" stroke="#50545b" /><ellipse cx="16" cy="10" rx="3" ry="3" fill="#cfe7f7" stroke="#50545b" /></svg></button>
          <button class="control" title="Reveal Hidden Elements"><svg viewBox="0 0 20 20" class="icon"><circle cx="10" cy="8" r="4" fill="#d5efff" stroke="#3b8fd9" stroke-width="1.500" /><path d="M8 12h4v6H8z" fill="#9a9c9f" stroke="#777b82" /></svg></button>
          <button class="control" title="Temporary View Properties"><svg viewBox="0 0 20 20" class="icon"><rect x="1" y="4" width="17" height="12" fill="#e4e4e4" stroke="#333" stroke-width="1.500" /><path d="M2 4h16M2 16h8" stroke="#111" stroke-width="3" stroke-dasharray="2 2" /><rect x="9" y="8" width="10" height="10" fill="#eee" stroke="#333" stroke-width="1.500" stroke-dasharray="3 2" /><circle cx="14" cy="13" r="2" fill="#50545b" /></svg></button>
          <button class="control" title="Analytical Model"><svg viewBox="0 0 20 20" class="icon"><path d="M1 17V8l6-6h11v9M1 8h13M7 2v12M12 2v12M5 8v9" fill="none" stroke="#50545b" stroke-width="1.500" /><path d="M3 18v-6h7v6" fill="none" stroke="#d0502c" stroke-width="2" /><circle cx="16" cy="8" r="4" fill="#ffe9a8" stroke="#d98b25" stroke-width="1.500" /><path d="M14 12h4v6h-4z" fill="#aaa" stroke="#777" /></svg></button>
          <button class="control" title="Reveal Constraints"><svg viewBox="0 0 20 20" class="icon"><path d="M1 1v17M19 1v6M1 4h18" stroke="#50545b" stroke-width="1.500" /><path d="M1 15h8" stroke="#50545b" stroke-dasharray="2 1" /><path d="M2 4l4-3v6zM18 4l-4-3v6z" fill="#3d4047" /><path d="M13 12V9h5v3" fill="none" stroke="#50545b" stroke-width="1.500" /><rect x="11" y="11" width="9" height="6" fill="#50545b" /></svg></button>
          <button class="control scroll-left" title="Scroll left"><svg viewBox="0 0 6 10" class="arrow-left"><path d="M5 1L1 5l4 4" fill="none" stroke="#50545b" stroke-width="1.500" /></svg></button>
          <div class="h-scroll"><div class="h-thumb"></div></div>
        </div>
      </section>
    </main>

    <footer class="statusbar">
      <span class="hint">Click to select, TAB for alternates, CTRL adds, SHIFT unselects.</span>
      <div class="worksets">
        <button class="status-tool" title="Worksets"><svg viewBox="0 0 20 20" class="icon"><path d="M6 6l1-4h8v7l-3 2H6z" fill="#fff" stroke="#222" stroke-width="1.500" /><path d="M1 10l3-3h6v9l-3 3H1z" fill="#79baf0" stroke="#1668b8" stroke-width="1.500" /><path d="M1 10h6v9M7 10l3-3" fill="none" stroke="#d9efff" /><path d="M13 7v4l3 2 3-2V7M16 12v7" fill="none" stroke="#3a5580" stroke-width="3" /><path d="M13 7v4l3 2 3-2V7M16 12v6" fill="none" stroke="#e6edf5" /></svg></button>
        <div class="select-box"><select aria-label="Active workset"><option></option></select><svg class="select-arrow"><use href="#down" /></svg></div>
        <button class="status-tool" title="Editing requests"><svg viewBox="0 0 20 20" class="icon"><path d="M6 1h12v5h-5l-2 3H9V6H6z" fill="#ccc" stroke="#fff" stroke-width="1.500" /><path d="M6 1h12v5h-5" fill="none" stroke="#98999b" /><path d="M1 19v-7h4V9h4v6h3v4z" fill="#98999b" /></svg></button>
        <span class="count dark">:0</span>
      </div>
      <div class="design-options">
        <button class="status-tool" title="Design Options"><svg viewBox="0 0 20 20" class="icon"><rect x="1" y="1" width="18" height="18" rx="1" fill="#fff" stroke="#33404f" stroke-width="1.500" /><path d="M1 3h18" stroke="#33404f" stroke-width="3" /><path d="M3 7h3M8 7h9M7 12h3M12 12h5M7 16h3M12 16h5" stroke="#33404f" stroke-width="2" /></svg></button>
        <button class="status-tool" title="Add to set" disabled><svg viewBox="0 0 20 20" class="icon"><path d="M2 1h17v18h-7" fill="#9a9c9f" stroke="#f2f2f2" stroke-width="1.500" /><path d="M2 1h16v17H2z" fill="#9a9c9f" /><path d="M0 12h6V9l6 5-6 5v-3H0z" fill="#9a9c9f" stroke="#f2f2f2" /></svg></button>
        <div class="select-box"><select aria-label="Active design option" disabled><option>Main Model</option></select><svg class="select-arrow"><use href="#down" /></svg></div>
      </div>
      <div class="selection-tools">
        <button class="status-tool" title="Select Links"><svg viewBox="0 0 20 20" class="icon"><rect x="1" y="2" width="10" height="7" rx="3" fill="#f6cf72" stroke="#d28b1f" stroke-width="1.500" /><path d="M4 6h5" stroke="#a8701a" stroke-width="1.500" /><use href="#pointer" x="7" y="5" width="9" height="14" /><use href="#cross" x="10" y="0" width="10" height="10" /></svg></button>
        <button class="status-tool" title="Select Underlay"><svg viewBox="0 0 20 20" class="icon"><path d="M9 1h10l-5 9H1zM1 15h10l6-7" fill="#d9ebfa" stroke="#2568ab" stroke-width="1.500" /><use href="#pointer" x="10" y="5" width="9" height="14" /></svg></button>
        <button class="status-tool" title="Select Pinned"><svg viewBox="0 0 20 20" class="icon"><path d="M1 1h10v3H9v4h3v4H1V8h2V4H1z" fill="#f3a455" stroke="#a84218" /><path d="M6 12v7" stroke="#50545b" /><use href="#pointer" x="10" y="5" width="9" height="14" /><use href="#cross" x="11" y="0" width="9" height="9" /></svg></button>
        <button class="status-tool" title="Select by Face"><svg viewBox="0 0 20 20" class="icon"><path d="M1 4l10-3v13L1 18z" fill="url(#sky)" stroke="#1668b8" stroke-width="1.500" /><use href="#pointer" x="9" y="5" width="9" height="14" /></svg></button>
        <button class="status-tool" title="Drag Elements"><svg viewBox="0 0 20 20" class="icon"><path d="M5 0v11M0 6h11" stroke="#222" stroke-width="1.500" /><path d="M3 2l2-2 2 2zM3 9l2 2 2-2zM2 4L0 6l2 2zM9 4l2 2-2 2z" fill="#222" /><use href="#pointer" x="10" y="5" width="9" height="14" /></svg></button>
        <button class="status-tool" title="Background Processes"><svg viewBox="0 0 20 20" class="icon"><circle cx="10" cy="10" r="7" fill="none" stroke="#999b9e" stroke-width="4" stroke-dasharray="3.500 2" /></svg></button>
        <button class="status-tool" title="Filter"><svg viewBox="0 0 20 20" class="icon"><path d="M1 1h18v3l-7 7v8H8v-8L1 4z" fill="#aeb1b6" stroke="#50545b" stroke-width="1.300" /><path d="M3 3h14" stroke="#eee" stroke-width="2" /></svg></button>
        <span class="count">:0</span>
      </div>
    </footer>
    <div class="desktop-edge"></div>
  </body>
</html>
```
FILE: styles.css
```css
* {
  box-sizing: border-box;
  margin: 0;
  padding: 0;
}

body {
  display: flex;
  flex-direction: column;
  height: 100vh;
  overflow: hidden;
  font-family: "Open Sans", "Noto Sans", sans-serif;
  font-size: 14px;
  line-height: 20px;
  color: #333;
  background-color: #ccc;
}

button,
input,
select {
  font: inherit;
  color: inherit;
  border: none;
  border-radius: 0;
  background: none;
}

button {
  white-space: nowrap;
}

svg {
  display: block;
  flex: none;
}

.defs {
  position: absolute;
  width: 0;
  height: 0;
}

.icon {
  width: 20px;
  height: 20px;
  overflow: visible;
}

.icon-large {
  width: 38px;
  height: 38px;
}

.icon-small {
  width: 10px;
  height: 10px;
}

.faded {
  opacity: 0.5;
}

.caret {
  flex: none;
  width: 0;
  height: 0;
  border: 3px solid transparent;
  border-top: 4px solid #3d4047;
  border-bottom: none;
}

.caret.wide {
  border-width: 5px;
  border-bottom: none;
}

.caret.muted {
  border-top-color: #777;
}

/* title bar */
.titlebar {
  display: flex;
  align-items: flex-start;
  flex: none;
  height: 34px;
}

.quick-access,
.account-bar {
  display: flex;
  align-items: center;
  height: 26px;
}

.quick-access {
  padding-left: 3px;
}

.tool {
  display: flex;
  align-items: center;
  justify-content: center;
  width: 30px;
  height: 26px;
}

.tool.split {
  justify-content: flex-start;
  gap: 10px;
  width: 45px;
  padding-left: 5px;
}

.tool-gap {
  margin-right: 4px;
}

.menu-end {
  margin-left: -6px;
}

.divider {
  width: 1px;
  height: 26px;
  margin: 0 4px;
  background-color: #bbb;
}

.window-title {
  flex: 1;
  font-size: 14px;
  font-weight: normal;
  text-align: center;
  white-space: nowrap;
}

.account-bar {
  width: 396px;
}

.account-bar .divider {
  margin: 0 6px;
}

.tool.collapse {
  width: 16px;
}

.arrow-left {
  width: 6px;
  height: 10px;
}

.tool.account {
  gap: 6px;
  width: 153px;
  padding-left: 5px;
  justify-content: flex-start;
}

.tool.account .caret {
  margin-left: -4px;
}

.spacer {
  flex: 1;
}

/* runs off the right edge of the window */
.maximize {
  flex: none;
  width: 2px;
  margin-left: 8px;
  justify-content: flex-start;
}

.logo-letter {
  font-size: 27px;
  font-weight: bold;
  fill: url(#logo);
}

.letter-icon {
  font-size: 23px;
  font-weight: bold;
  fill: #3d4047;
}

.tag-number {
  font-size: 10px;
  font-weight: bold;
  fill: #3d4047;
}

.help-mark {
  font-size: 16px;
  font-weight: bold;
  fill: #1668b8;
}

/* ribbon */
.ribbon-tabs {
  display: flex;
  flex: none;
  height: 25px;
  padding-left: 2px;
}

.ribbon-tab {
  height: 25px;
  padding: 0 12px;
}

.ribbon-tab.roomy {
  padding: 0 13px;
}

.ribbon-tab.file {
  width: 56px;
  margin-right: 2px;
  color: #fff;
  background-color: #2a7ab8;
}

.ribbon-tab.active {
  background-color: #ededed;
}

.ribbon-state {
  display: flex;
  align-items: center;
  gap: 7px;
  margin-left: 28px;
}

.state-icon {
  width: 18px;
  height: 12px;
}

.ribbon {
  display: flex;
  flex: none;
  height: 121px;
  padding: 1px 0 0 2px;
  background-color: #ededed;
  border-bottom: 1px solid #ccc;
}

.panel {
  display: flex;
  flex-direction: column;
  border-right: 1px solid #d4d4d4;
}

.panel-body {
  flex: 1;
  padding-top: 2px;
}

.panel-label {
  display: flex;
  align-items: center;
  justify-content: center;
  gap: 8px;
  height: 24px;
}

.columns {
  display: flex;
  align-items: flex-start;
}

.panel-select {
  width: 72px;
}

.panel-properties {
  width: 80px;
}

.panel-clipboard {
  width: 98px;
}

.panel-geometry {
  width: 179px;
}

.panel-modify {
  width: 300px;
}

.panel-view {
  width: 81px;
}

.panel-measure {
  width: 70px;
}

.panel-create {
  width: 120px;
  padding-right: 18px;
  border-right: none;
}

.modify-button {
  display: flex;
  flex-direction: column;
  align-items: center;
  gap: 12px;
  width: 53px;
  height: 89px;
  margin-left: 9px;
  padding-top: 9px;
  border: 1px solid #1668b8;
  background-color: #b5d5f3;
}

.modify-arrow {
  width: 16px;
  height: 26px;
}

.stack {
  display: flex;
  flex-direction: column;
  align-items: center;
}

.big {
  display: flex;
  align-items: center;
  justify-content: center;
  width: 49px;
  height: 44px;
}

.stack .big {
  width: 47px;
}

.stack .selected {
  height: 41px;
  margin-top: 2px;
  border: 1px solid #1668b8;
  background-color: #b5d5f3;
}

.paste-button {
  display: flex;
  flex-direction: column;
  align-items: center;
  width: 65px;
  padding-top: 2px;
  color: #a8a8a8;
}

.paste-button .icon-large {
  margin-bottom: 8px;
}

.paste-button .caret {
  margin-top: 5px;
  border-top-color: #999;
}

.small {
  display: flex;
  align-items: center;
  justify-content: center;
  width: 31px;
  height: 31px;
}

.small-grid,
.large-grid,
.view-grid {
  display: grid;
  align-items: center;
}

.small-grid.one {
  grid-template-columns: 31px;
}

.small-grid.two {
  grid-template-columns: 31px 31px;
}

.small-grid.three {
  grid-template-columns: 31px 31px 31px;
}

.large-grid.two {
  grid-template-columns: 49px 49px;
}

.large-grid.four {
  grid-template-columns: 49px 49px 49px 49px;
}

.large-grid.measure {
  grid-template-columns: 54px 10px;
}

.view-grid {
  grid-template-columns: 31px 15px 31px;
}

.panel-geometry .columns,
.panel-modify .columns {
  padding-left: 2px;
}

.panel-modify .columns {
  gap: 3px;
}

.commands {
  width: 94px;
}

.command {
  display: flex;
  align-items: center;
  gap: 7px;
  height: 31px;
  padding-left: 5px;
}

.command .caret {
  margin-left: 5px;
}

.caret.middle {
  align-self: center;
  margin-left: 4px;
}

.options-bar {
  flex: none;
  height: 35px;
  background-color: #ededed;
  border-bottom: 2px solid #ccc;
}

/* workspace */
.workspace {
  display: flex;
  flex: 1;
  min-height: 0;
}

.palette {
  display: flex;
  flex-direction: column;
  flex: none;
  width: 441px;
  border-left: 1px solid #ccc;
  border-right: 2px solid #ccc;
  background-color: #ededed;
}

.palette-title {
  display: flex;
  align-items: center;
  justify-content: space-between;
  height: 24px;
  padding: 0 6px 0 4px;
}

.palette-title h2 {
  font-size: 14px;
  font-weight: normal;
}

.close-icon {
  width: 14px;
  height: 14px;
}

.type-selector {
  display: flex;
  align-items: center;
  flex: none;
  gap: 5px;
  height: 88px;
  margin: 0 3px 0 2px;
  padding: 1px 2px 0 3px;
  border: 1px solid #ccc;
  border-bottom: none;
  background-color: #f0f0f0;
}

.type-preview {
  display: flex;
  align-items: center;
  justify-content: center;
  width: 82px;
  height: 82px;
  border: 1px solid #ccc;
}

.type-name {
  flex: 1;
  text-align: left;
}

.filter-row {
  display: flex;
  gap: 6px;
  height: 30px;
  padding: 1px 3px 1px 2px;
  color: #000;
}

.select-box {
  position: relative;
  width: 254px;
  height: 22px;
}

.select-box select {
  width: 100%;
  height: 100%;
  padding-left: 1px;
  appearance: none;
  background-color: #fff;
}

.select-box select:disabled {
  color: #838383;
  opacity: 1;
}

.select-arrow {
  position: absolute;
  top: 8px;
  right: 4px;
  width: 10px;
  height: 6px;
}

.select-box.filter {
  width: 337px;
  height: 28px;
}

.filter select {
  padding: 2px 0 0 3px;
  border: 1px solid #adadad;
  background-color: #e1e1e1;
}

.filter .select-arrow {
  top: 11px;
  right: 5px;
}

.edit-type {
  display: flex;
  align-items: center;
  gap: 5px;
  height: 25px;
}

.icon-edit {
  width: 17px;
  height: 17px;
}

.grid-area {
  display: flex;
  flex: 1;
  min-height: 0;
  padding: 0 4px 0 2px;
}

.properties {
  flex: 1;
  align-self: flex-start;
  table-layout: fixed;
  border-spacing: 0;
  width: 413px;
  color: #000;
  background-color: #fff;
}

.col-name {
  width: 199px;
}

.col-link {
  width: 16px;
}

.properties th,
.properties td {
  height: 24px;
  padding-top: 1px;
  font-weight: normal;
  text-align: left;
  vertical-align: top;
  white-space: nowrap;
  border-right: 1px dotted #666;
  border-bottom: 1px dotted #666;
}

.properties th {
  padding-left: 10px;
}

.properties td {
  padding-left: 2px;
}

.properties .group th {
  padding: 2px 6px 0 2px;
  border: none;
  background-color: #dcdcdc;
}

.group button {
  float: right;
  margin-top: 1px;
}

.chevrons {
  width: 8px;
  height: 10px;
}

.properties .readonly {
  color: #838383;
}

.properties .editing {
  padding: 0;
}

.editing input {
  display: block;
  width: 197px;
  height: 23px;
  padding: 0 0 2px 5px;
  border: 1px solid #000;
}

.properties .action {
  padding: 1px 0 0 1px;
}

.action button {
  display: block;
  width: 100%;
  height: 22px;
  border: 1px solid #adadad;
  border-right-width: 2px;
  border-bottom-width: 2px;
  background-color: #e1e1e1;
}

.properties input[type="checkbox"] {
  display: block;
  width: 16px;
  height: 16px;
  margin: 3px 0 0 1px;
  appearance: none;
  border: 1px solid #222;
  background-color: #fff;
}

.scrollbar {
  display: flex;
  flex-direction: column;
  align-items: center;
  width: 19px;
  background-color: #f0f0f0;
}

.scroll-arrow {
  width: 10px;
  height: 6px;
  margin: 8px 0 7px;
}

.scrollbar .thumb {
  width: 19px;
  height: 278px;
  margin-bottom: auto;
  background-color: #ccc;
}

.palette-footer {
  display: flex;
  align-items: flex-start;
  justify-content: space-between;
  flex: none;
  height: 33px;
  padding: 2px 5px 5px 4px;
}

.palette-footer a {
  color: #0b6cc4;
}

.apply {
  width: 86px;
  height: 26px;
  color: #838383;
  border: 1px solid #bfbfbf;
  background-color: #ccc;
}

.palette-tabs {
  display: flex;
  flex: none;
  height: 27px;
  background-color: #ccc;
}

.palette-tabs button {
  padding: 0 8px 2px 7px;
}

.palette-tabs .active {
  background-color: #ededed;
}

/* views */
.views {
  display: flex;
  flex-direction: column;
  flex: 1;
  min-width: 0;
  background-color: #fff;
}

.view-tabs {
  display: flex;
  flex: none;
  height: 25px;
  background-color: #ccc;
}

.view-tab {
  display: flex;
  align-items: center;
  gap: 9px;
  width: 160px;
  padding: 0 6px;
}

.view-tab.active {
  font-weight: bold;
  background-color: #fff;
}

.view-tab .close-button {
  margin-left: auto;
}

.canvas {
  position: relative;
  flex: 1;
  min-height: 0;
}

.drawing {
  width: 100%;
  height: 100%;
}

/* sits over the drawing, mostly past the window edge */
.navigation-bar {
  position: absolute;
  top: 2px;
  right: -20px;
  width: 25px;
  height: 118px;
  border: 2px solid #bbb;
  border-radius: 6px;
}

.view-controls {
  display: flex;
  align-items: center;
  flex: none;
  height: 22px;
  margin: 0 0 2px 2px;
  border-bottom: 1px solid #ccc;
  background-color: #f0f0f0;
}

.scale {
  width: 89px;
  padding-left: 6px;
  font-family: "DejaVu Sans", sans-serif;
  font-size: 12px;
  text-align: center;
  color: #000;
}

.control {
  display: flex;
  align-items: center;
  justify-content: center;
  width: 25px;
  height: 21px;
}

.scroll-left {
  width: 20px;
}

.h-scroll {
  flex: 1;
  height: 20px;
}

.h-thumb {
  width: 21px;
  height: 20px;
  margin-left: 50%;
  background-color: #ccc;
}

/* status bar */
.statusbar {
  display: flex;
  align-items: center;
  flex: none;
  height: 35px;
  padding: 0 46px 2px 3px;
}

.hint {
  width: 651px;
  color: #000;
  white-space: nowrap;
}

.worksets,
.design-options,
.selection-tools {
  display: flex;
  align-items: center;
}

.status-tool {
  display: flex;
  align-items: center;
  justify-content: center;
  width: 30px;
  height: 24px;
}

.worksets {
  gap: 3px;
}

.design-options {
  margin-left: 19px;
}

.design-options .select-box {
  margin-left: 4px;
}

.selection-tools {
  margin-left: auto;
}

.count {
  margin-left: -4px;
}

.count.dark {
  color: #000;
}

/* strip of desktop under the window */
.desktop-edge {
  flex: none;
  height: 8px;
  background:
    linear-gradient(to right, #14120c 3%, #aaaab0 3%, #aaaab0 26%, #241f1a 26%, #241f1a 72%, #444 72%, #444 79%, #241f1a 79%) bottom / 100% 2px no-repeat,
    linear-gradient(to right, #eee 1%, #e2d3c2 1%, #e2d3c2 75%, #e6e6e6 75%);
}
```
